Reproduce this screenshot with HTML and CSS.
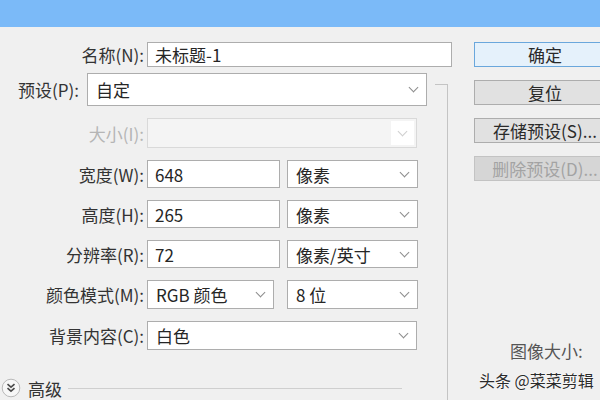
FILE: index.html
```html
<!DOCTYPE html>
<html lang="zh-CN">
<head>
<meta charset="utf-8">
<title>新建</title>
<link rel="stylesheet" href="styles.css">
</head>
<body>
<div class="titlebar"></div>
<div class="dialog">
  <div class="left">
    <div class="row name-row">
      <span class="lbl">名称(N):</span>
      <div class="box text w-name">未标题-1</div>
    </div>
    <div class="lower">
      <div class="fields">
        <div class="row preset-row">
          <span class="lbl-left">预设(P):</span>
          <div class="box select w-preset"><span>自定</span><i class="chev"></i></div>
        </div>
        <div class="row size-row">
          <span class="lbl disabled">大小(I):</span>
          <div class="box disabled-box w-full"><span class="dis-drop"><i class="chev light"></i></span></div>
        </div>
        <div class="row h28">
          <span class="lbl">宽度(W):</span>
          <div class="box text w-num">648</div>
          <div class="box select w-unit"><span>像素</span><i class="chev"></i></div>
        </div>
        <div class="row h28">
          <span class="lbl">高度(H):</span>
          <div class="box text w-num">265</div>
          <div class="box select w-unit"><span>像素</span><i class="chev"></i></div>
        </div>
        <div class="row h28">
          <span class="lbl">分辨率(R):</span>
          <div class="box text w-num">72</div>
          <div class="box select w-unit"><span>像素/英寸</span><i class="chev"></i></div>
        </div>
        <div class="row h29">
          <span class="lbl">颜色模式(M):</span>
          <div class="box select w-mode"><span>RGB 颜色</span><i class="chev"></i></div>
          <div class="box select w-unit after-mode"><span>8 位</span><i class="chev"></i></div>
        </div>
        <div class="row h29">
          <span class="lbl">背景内容(C):</span>
          <div class="box select w-full"><span>白色</span><i class="chev"></i></div>
        </div>
        <div class="advanced">
          <svg class="adv-icon" width="20" height="20" viewBox="0 0 20 20">
            <circle cx="10" cy="10" r="8.8" fill="#f7f7f7" stroke="#b9b9b9" stroke-width="1"/>
            <polyline points="6.5,6.2 10,9.2 13.5,6.2" fill="none" stroke="#4a4a4a" stroke-width="1.6"/>
            <polyline points="6.5,10.2 10,13.2 13.5,10.2" fill="none" stroke="#4a4a4a" stroke-width="1.6"/>
          </svg>
          <span class="adv-text">高级</span>
          <span class="adv-line"></span>
        </div>
      </div>
      <div class="divider"></div>
    </div>
  </div>
  <div class="right">
    <div class="btn primary">确定</div>
    <div class="btn">复位</div>
    <div class="btn">存储预设(S)...</div>
    <div class="btn off">删除预设(D)...</div>
    <div class="img-size">图像大小:</div>
  </div>
</div>
<div class="watermark">头条 @菜菜剪辑</div>
</body>
</html>
```

FILE: styles.css
```css
* { box-sizing: border-box; }
html, body {
  margin: 0;
  padding: 0;
}
body {
  width: 600px;
  height: 400px;
  overflow: hidden;
  background: #f0f0f0;
  font-family: "Noto Sans CJK SC", "Noto Sans", sans-serif;
  font-size: 17px;
  color: #2e2e2e;
  position: relative;
}
.titlebar {
  height: 27px;
  background: #7bbaf8;
}
.dialog {
  display: flex;
  height: 373px;
}
.left {
  width: 474px;
  flex: none;
  padding-top: 15px;
  display: flex;
  flex-direction: column;
}
.row {
  display: flex;
  align-items: stretch;
}
.name-row { height: 25px; }
.lbl {
  width: 147px;
  flex: none;
  text-align: right;
  padding-right: 3px;
  display: flex;
  align-items: center;
  justify-content: flex-end;
  line-height: 1;
  color: #333;
}
.lbl.disabled { color: #b5b5b5; }
.lbl-left {
  width: 87px;
  flex: none;
  padding-left: 18px;
  display: flex;
  align-items: center;
  line-height: 1;
  color: #333;
}
.box {
  border: 1px solid #adadad;
  background: #fff;
  display: flex;
  align-items: center;
  line-height: 1;
  color: #262626;
}
.text { padding-left: 7px; }
.select {
  justify-content: space-between;
  padding: 0 9px 0 8px;
}
.w-name { width: 305px; }
.w-preset { width: 340px; }
.w-full { width: 270px; }
.w-num { width: 133px; }
.w-mode { width: 127px; }
.w-unit { width: 131px; margin-left: 7px; }
.w-unit.after-mode { margin-left: 13px; }

.lower {
  flex: 1;
  margin-top: 6px;
  display: flex;
}
.fields {
  width: 435px;
  flex: none;
  display: flex;
  flex-direction: column;
  gap: 12px;
}
.preset-row { height: 33px; }
.size-row { height: 30px; }
.h28 { height: 28px; }
.h29 { height: 29px; }
.disabled-box {
  background: #f4f4f4;
  border-color: #d9d9d9;
  justify-content: flex-end;
  padding: 2px;
}
.dis-drop {
  width: 23px;
  height: 100%;
  background: #fff;
  display: flex;
  align-items: center;
  justify-content: center;
}
.chev {
  display: block;
  width: 7px;
  height: 7px;
  border-right: 1.3px solid #8c8c8c;
  border-bottom: 1.3px solid #8c8c8c;
  transform: translateY(-2px) rotate(45deg);
  flex: none;
}
.chev.light {
  border-color: #cfcfcf;
}
.advanced {
  margin-top: 16px;
  height: 20px;
  display: flex;
  align-items: center;
  padding-left: 1px;
}
.adv-icon { flex: none; }
.adv-text {
  margin-left: 7px;
  line-height: 1;
  color: #333;
}
.adv-line {
  margin-left: 6px;
  width: 334px;
  height: 1px;
  background: #cfcfcf;
}
.divider {
  width: 13px;
  margin-top: 11px;
  border-top: 1px solid #c4c4c4;
  border-right: 1px solid #c4c4c4;
  flex: none;
}

.right {
  flex: none;
  width: 142px;
  padding-top: 15px;
  display: flex;
  flex-direction: column;
  gap: 13px;
}
.btn {
  height: 25px;
  border: 1px solid #adadad;
  background: #e1e1e1;
  display: flex;
  align-items: center;
  justify-content: center;
  line-height: 1;
  color: #2a2a2a;
  white-space: nowrap;
}
.btn.primary {
  background: #e5f1fb;
  border-color: #6aa7dc;
}
.btn.off {
  background: #d6d6d6;
  border-color: #c3c3c3;
  color: #a3a3a3;
}
.img-size {
  margin-top: 148px;
  padding-left: 36px;
  line-height: 1;
  color: #555;
}
.watermark {
  position: absolute;
  left: 479px;
  top: 372px;
  font-size: 16px;
  line-height: 1;
  color: #2b2b2b;
  text-shadow: 0 0 2px #fff, 0 0 1px #fff;
}
```
